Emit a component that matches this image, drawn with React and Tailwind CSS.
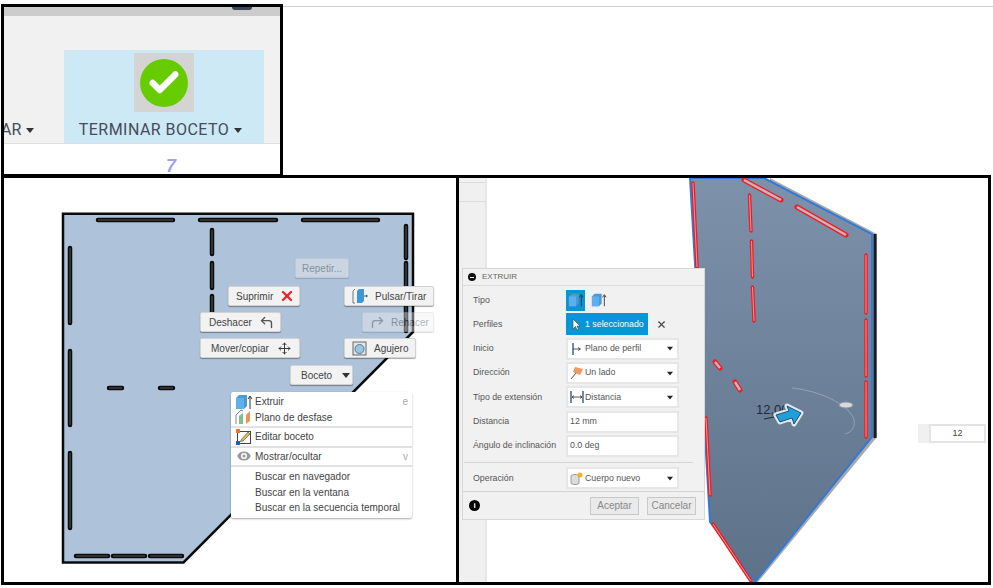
import React from 'react';
import { Check, CornerUpLeft, Eye, Move, X } from 'lucide-react';

const slots = [
  [98, 220, 173, 220], [200, 220, 276, 220], [303, 220, 378, 220],
  [70, 248, 70, 323], [70, 351, 70, 425], [70, 453, 70, 528],
  [76, 556, 108, 556], [113, 556, 145, 556], [150, 556, 182, 556],
  [109, 388, 122, 388], [160, 388, 173, 388],
  [212, 230, 212, 254], [212, 263, 212, 288], [212, 296, 212, 320],
  [406, 226, 406, 258], [406, 263, 406, 331],
];

// last value: slot seen wide on, so the pale inside shows more
const redSlots = [
  [693, 183, 697, 267], [706, 418, 710, 495],
  [749.5, 195, 751, 231], [751.5, 241, 752.5, 277], [752.5, 287, 754, 321],
  [744, 180, 781, 200, true], [797, 207, 846, 235, true],
  [866, 255, 866, 313], [866, 320, 866, 376], [866, 382, 866, 437],
  [715, 362, 720, 368, true], [735, 382, 740, 390, true], [713, 524, 751, 581],
];

const arrowPath = 'M776 415 L789 411 L787 406 L801 413 L794 424 L792 418 L780 422 Z';

function Caret({ className = 'border-t-[#444]' }) {
  return <span className={`inline-block w-0 h-0 border-x-[4px] border-x-transparent border-t-[5px] ${className}`} />;
}

function FloatButton({ className, children }) {
  return (
    <div className={`absolute h-[20px] flex items-center bg-[#f2f2f2] border border-[#d2d2d2] rounded-[2px] shadow-[0_1px_1px_rgba(0,0,0,0.35)] text-[10px] text-[#444] whitespace-nowrap ${className}`}>
      {children}
    </div>
  );
}

function ExtrudeIcon({ small }) {
  return (
    <svg width={small ? 16 : 18} height="16" viewBox="0 0 18 16">
      <path d="M1 4 L4 1 H12 V12 L9 15 H1 Z" fill="#4a9ad8" />
      <path d="M1 4 H9 V15 H1 Z" fill="#5fb0ea" />
      <path d="M15 15 V3 M13 5 L15 2 L17 5" stroke="#333" strokeWidth="1" fill="none" />
    </svg>
  );
}

function PlaneIcon() {
  return (
    <svg width="18" height="16" viewBox="0 0 18 16">
      <path d="M1 15 V6 L6 1 L8 2" stroke="#888" strokeWidth="1" fill="none" />
      <path d="M4 15 V7 L8 4 V15 Z" fill="#7cc08a" />
      <path d="M11 15 V6 L15 2 V12 Z" fill="#e8935a" />
    </svg>
  );
}

function EditIcon() {
  return (
    <svg width="16" height="16" viewBox="0 0 16 16">
      <rect x="1.5" y="2.5" width="13" height="12" fill="#fff" stroke="#444" />
      <rect x="0" y="0" width="4" height="4" fill="#e8762d" />
      <rect x="0" y="12" width="4" height="4" fill="#1b5fc0" />
      <path d="M5 11 L12 3 L14 5 L7 12 L4.500 12.500 Z" fill="#e9b949" stroke="#555" strokeWidth="0.7" />
    </svg>
  );
}

function Sketch() {
  return (
    <svg className="absolute inset-0" width="452" height="404" viewBox="4 178 452 404">
      <path d="M63 213.700 H413 V332 L183.500 562.500 H63 Z" fill="#aec2d9" stroke="#0b0b0b" strokeWidth="2.500" />
      {slots.map((s, i) => (
        <g key={i}>
          <line x1={s[0]} y1={s[1]} x2={s[2]} y2={s[3]} stroke="#0d0d0d" strokeWidth="4.500" strokeLinecap="round" />
          <line x1={s[0]} y1={s[1]} x2={s[2]} y2={s[3]} stroke="#555" strokeWidth="1" />
        </g>
      ))}
    </svg>
  );
}

function MenuRow({ icon, label, hint, className = '' }) {
  return (
    <div className={`flex items-center h-[15.500px] pl-[2px] pr-[4px] ${className}`}>
      <span className="w-[22px] flex items-center justify-center">{icon}</span>
      <span className="flex-1">{label}</span>
      {hint && <span className="text-[#aaa]">{hint}</span>}
    </div>
  );
}

function Body3D() {
  return (
    <svg className="absolute inset-0" width="529" height="404" viewBox="459 178 529 404">
      <defs>
        <linearGradient id="bodyFill" x1="0" y1="0" x2="0" y2="1">
          <stop offset="0" stopColor="#7d92aa" />
          <stop offset="1" stopColor="#5d7289" />
        </linearGradient>
      </defs>
      <path d="M770 178 L877 234 V437 L758 582 H750 Z" fill="#a9a9a9" />
      <path d="M873.500 234 H876.500 V438 H873.500 Z" fill="#1a1a1a" />
      <path d="M690 178 H764 L872 234 V437 L755 582 L710 522 Z" fill="url(#bodyFill)" stroke="#3579d6" strokeWidth="2" />
      {redSlots.map((s, i) => (
        <g key={i}>
          <line x1={s[0]} y1={s[1]} x2={s[2]} y2={s[3]} stroke="#f01c24" strokeWidth={s[4] ? 5 : 3.5} strokeLinecap="round" />
          <line x1={s[0]} y1={s[1]} x2={s[2]} y2={s[3]} stroke={s[4] ? '#c4b6ba' : '#e79a9e'} strokeWidth={s[4] ? 2.5 : 1} />
        </g>
      ))}
      <path d="M792 388 C830 392 858 412 854 425 C853 430 849 433 845 434" fill="none" stroke="#a4afbb" strokeWidth="1" opacity="0.7" />
      <ellipse cx="846" cy="405" rx="7" ry="3" fill="#d6dade" stroke="#8a949f" />
      <text x="756" y="414" fontSize="13" fill="#1d2a3c" fontFamily="Liberation Sans, sans-serif">12,00</text>
      <line x1="764" y1="419" x2="774" y2="417" stroke="#1d2a3c" strokeWidth="1.200" />
      <path d={arrowPath} fill="none" stroke="#dfe8ee" strokeWidth="5" strokeLinejoin="round" />
      <path d={arrowPath} fill="#1f9fdb" stroke="#14344e" strokeWidth="0.800" strokeLinejoin="round" />
    </svg>
  );
}

function Row({ label, children }) {
  return (
    <div className="flex items-center h-[24.300px]">
      <span className="w-[103px] pl-[10px] shrink-0 whitespace-nowrap">{label}</span>
      {children}
    </div>
  );
}

function SelectBox({ icon, label }) {
  return (
    <div className="w-[113px] h-[22px] bg-white border-2 border-[#e6e6e6] flex items-center pr-[3px]">
      <span className="w-[17px] shrink-0 flex items-center justify-center">{icon}</span>
      <span className="flex-1">{label}</span>
      <Caret className="border-t-[#222] scale-75" />
    </div>
  );
}

function TextBox({ value }) {
  return <div className="w-[113px] h-[22px] bg-white border-2 border-[#e6e6e6] flex items-center pl-[2px]">{value}</div>;
}

function ExtrudeDialog() {
  return (
    <div className="absolute left-[3px] top-[90px] w-[243px] h-[252px] bg-[#f1f1f1] border border-[#d8d8d8] flex flex-col text-[8.800px] text-[#555] font-['Liberation_Sans',sans-serif]">
      <div className="h-[17px] shrink-0 flex items-center pl-[5px] gap-[6px] border-b border-[#dcdcdc] text-[#666] text-[8px]">
        <span className="w-[8px] h-[8px] rounded-full bg-[#111] flex items-center justify-center">
          <span className="w-[4px] h-px bg-white" />
        </span>
        EXTRUIR
      </div>
      <div className="pt-[2px]">
        <Row label="Tipo">
          <div className="w-[19px] h-[21px] bg-[#0696d7] flex items-center justify-center">
            <ExtrudeIcon small />
          </div>
          <div className="ml-[6px] flex items-center"><ExtrudeIcon small /></div>
        </Row>
        <Row label="Perfiles">
          <div className="w-[82px] h-[22px] bg-[#0696d7] text-white flex items-center pl-[6px] gap-[4px] whitespace-nowrap">
            <svg width="9" height="13" viewBox="0 0 9 13"><path d="M1 1 V11 L3.500 8.500 L5 12 L6.500 11.500 L5 8 H8 Z" fill="#fff" stroke="#444" strokeWidth="0.600" /></svg>
            1 seleccionado
          </div>
          <X className="ml-[8px] text-[#444]" size={11} strokeWidth={2.500} />
        </Row>
        <Row label="Inicio">
          <SelectBox label="Plano de perfil" icon={
            <svg width="11" height="12" viewBox="0 0 11 12"><path d="M2 0 V12" stroke="#1c3a6b" strokeWidth="1.200" /><path d="M2 6 H9 M7 4.500 L9.500 6 L7 7.500" stroke="#333" strokeWidth="0.800" fill="none" /></svg>
          } />
        </Row>
        <Row label="Dirección">
          <SelectBox label="Un lado" icon={
            <svg width="14" height="14" viewBox="0 0 14 14"><path d="M5 1 L13 3 L10 9 L3 6 Z" fill="#ee9a66" /><path d="M1 13 L6 7" stroke="#555" strokeWidth="1" /></svg>
          } />
        </Row>
        <Row label="Tipo de extensión">
          <SelectBox label="Distancia" icon={
            <svg width="14" height="12" viewBox="0 0 14 12"><path d="M1 0 V12 M13 0 V12" stroke="#1c3a6b" strokeWidth="1.200" /><path d="M2 6 H12 M4 4.500 L2 6 L4 7.500 M10 4.500 L12 6 L10 7.500" stroke="#333" strokeWidth="0.800" fill="none" /></svg>
          } />
        </Row>
        <Row label="Distancia"><TextBox value="12 mm" /></Row>
        <Row label="Ángulo de inclinación"><TextBox value="0.0 deg" /></Row>
      </div>
      <div className="mt-[4px] ml-px mr-[11px] h-px bg-[#d4d4d4]" />
      <div className="mt-[3px]">
        <Row label="Operación">
          <SelectBox label="Cuerpo nuevo" icon={
            <svg width="13" height="13" viewBox="0 0 13 13"><path d="M1 4 C1 2 9 2 9 4 V11 C9 13 1 13 1 11 Z" fill="#ddd" stroke="#777" strokeWidth="0.700" /><circle cx="10" cy="3" r="2.500" fill="#f5b21a" /></svg>
          } />
        </Row>
      </div>
      <div className="flex-1 mt-px border-t border-[#d4d4d4] flex items-center pl-[6px] pr-[8px] text-[10px]">
        <span className="w-[11px] h-[11px] rounded-full bg-black text-white text-[8px] font-bold flex items-center justify-center">i</span>
        <div className="ml-auto flex gap-[8px] text-[#888]">
          <div className="w-[49px] h-[18px] bg-[#eaeaea] border border-[#c8c8c8] flex items-center justify-center">Aceptar</div>
          <div className="w-[49px] h-[18px] bg-[#eaeaea] border border-[#c8c8c8] flex items-center justify-center">Cancelar</div>
        </div>
      </div>
    </div>
  );
}

export default function App() {
  return (
    <div className="w-[993px] h-[588px] bg-white overflow-hidden pt-[4px] font-['Liberation_Sans',sans-serif]">
      <div className="flex items-start">
        <div className="ml-px w-[282px] h-[173px] border-[3px] border-black shrink-0 flex flex-col overflow-hidden relative z-10">
          <div className="h-[9px] shrink-0 bg-[#cccccc] relative">
            <div className="absolute left-[228px] top-0 w-[20px] h-[3px] rounded-b-full bg-[#3a4658]" />
          </div>
          <div className="h-[128px] shrink-0 bg-[#f1f1f1] border-b border-[#dedede] flex items-end font-['Roboto',sans-serif] text-[16px] text-[#464c58]">
            <div className="w-[60px] h-[26px] flex items-center -ml-[4px] pl-px gap-[5px] shrink-0">
              <span>AR</span>
              <Caret className="border-t-[#333]" />
            </div>
            <div className="ml-[4px] w-[200px] h-[93px] bg-[#cce9f5] flex flex-col items-center pt-[3px]">
              <div className="w-[60px] h-[59px] bg-[#d4d4d4] flex items-center justify-center">
                <div className="w-[48px] h-[48px] rounded-full bg-[#66cc00] flex items-center justify-center">
                  <Check className="text-white" size={34} strokeWidth={4.500} />
                </div>
              </div>
              <div className="mt-[6px] pr-[7px] flex items-center gap-[5px] whitespace-nowrap">
                <span className="tracking-[0.45px]">TERMINAR BOCETO</span>
                <Caret className="border-t-[#333]" />
              </div>
            </div>
          </div>
          <div className="flex-1 bg-white flex justify-center">
            <span className="ml-[58px] text-[18px] leading-[44px] font-bold italic text-[#a0a0f8]">7</span>
          </div>
        </div>
        <div className="flex-1 h-px mt-[2px] bg-[#d0d0d0]" />
      </div>

      <div className="flex -mt-[2px]">
        <div className="ml-px w-[458px] h-[410px] border-[3px] border-black relative shrink-0 bg-white">
          <Sketch />
          <FloatButton className="left-[291px] top-[80px] w-[54px] justify-center opacity-40">Repetir...</FloatButton>
          <FloatButton className="left-[224px] top-[108px] w-[72px] pl-[7px] gap-[6px]">
            Suprimir
            <X className="text-[#e8222b]" size={16} strokeWidth={3.500} />
          </FloatButton>
          <FloatButton className="left-[196px] top-[134px] w-[81px] pl-[8px] gap-[7px]">
            Deshacer
            <CornerUpLeft className="text-[#555]" size={15} strokeWidth={2.200} />
          </FloatButton>
          <FloatButton className="left-[196px] top-[160px] w-[100px] pl-[10px] gap-[9px]">
            Mover/copiar
            <Move className="text-[#333]" size={13} strokeWidth={1.800} />
          </FloatButton>
          <FloatButton className="left-[340px] top-[108px] w-[90px] pl-[7px] gap-[7px]">
            <svg width="16" height="16" viewBox="0 0 16 16">
              <path d="M1 3 V15 M1 3 L3 1 M1 15 H3" stroke="#777" fill="none" />
              <path d="M5 3 L7 1 H12 V13 L10 15 H5 Z" fill="#3d97d8" />
              <path d="M12 8 H15 M14 7 L15.500 8 L14 9" stroke="#333" strokeWidth="0.800" fill="none" />
            </svg>
            Pulsar/Tirar
          </FloatButton>
          <FloatButton className="left-[358px] top-[134px] w-[72px] pl-[7px] gap-[6px] opacity-40">
            <CornerUpLeft className="text-[#555] -scale-x-100" size={15} strokeWidth={2.200} />
            Rehacer
          </FloatButton>
          <FloatButton className="left-[340px] top-[160px] w-[72px] pl-[7px] gap-[7px]">
            <svg width="15" height="15" viewBox="0 0 15 15">
              <rect x="1" y="1" width="13" height="13" fill="#e4e4e4" stroke="#666" />
              <circle cx="7.500" cy="8" r="4.500" fill="#9cc4df" stroke="#4d7fa3" />
            </svg>
            Agujero
          </FloatButton>
          <FloatButton className="left-[286px] top-[187px] w-[63px] pl-[10px] gap-[10px]">
            Boceto
            <Caret className="border-t-[#333]" />
          </FloatButton>

          <div className="absolute left-[227px] top-[214px] w-[181px] h-[126px] bg-white rounded-[2px] shadow-[0_1px_2px_rgba(0,0,0,0.35)] flex flex-col pt-[2px] text-[10px] text-[#444]">
            <MenuRow icon={<ExtrudeIcon />} label="Extruir" hint="e" />
            <MenuRow icon={<PlaneIcon />} label="Plano de desfase" />
            <div className="h-[2px] mt-px bg-[#e2e2e2]" />
            <MenuRow icon={<EditIcon />} label="Editar boceto" className="mt-px" />
            <div className="h-[2px] mt-px bg-[#e2e2e2]" />
            <MenuRow icon={<Eye className="fill-[#999] text-white" size={18} />} label="Mostrar/ocultar" hint="v" className="mt-px" />
            <div className="h-[2px] mt-px bg-[#e2e2e2]" />
            <div className="mt-[2px]">
              <MenuRow label="Buscar en navegador" />
              <MenuRow label="Buscar en la ventana" />
              <MenuRow label="Buscar en la secuencia temporal" />
            </div>
          </div>
        </div>

        <div className="-ml-[3px] w-[535px] h-[410px] border-[3px] border-black relative shrink-0 bg-white">
          <Body3D />
          <div className="absolute left-0 top-0 bottom-0 w-[28px] bg-[#f0f0f0] border-r-2 border-[#e6e6e6] flex flex-col">
            <div className="mt-[4px] h-[20px] border-t border-b border-[#dcdcdc]" />
          </div>
          <ExtrudeDialog />
          <div className="absolute left-[459px] top-[246px] h-[19px] w-[68px] bg-[#f0f0f0] flex justify-end">
            <div className="w-[57px] h-full bg-white border-2 border-[#e4e4e4] flex items-center justify-center text-[9px] text-[#444]">12</div>
          </div>
        </div>
      </div>
    </div>
  );
}
